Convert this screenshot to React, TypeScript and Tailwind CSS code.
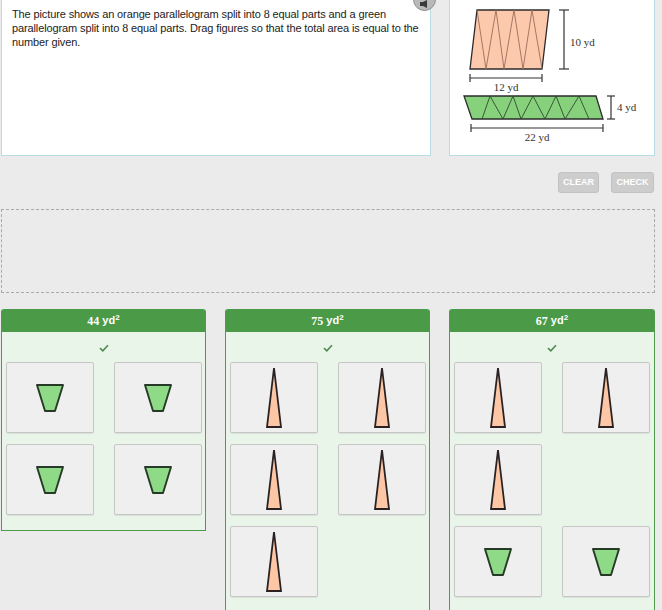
import React from "react";

type Shape = "tri" | "trap";

const COLUMNS: { area: string; tiles: (Shape | null)[] }[] = [
  { area: "44", tiles: ["trap", "trap", "trap", "trap"] },
  { area: "75", tiles: ["tri", "tri", "tri", "tri", "tri"] },
  { area: "67", tiles: ["tri", "tri", "tri", null, "trap", "trap"] },
];

function Trapezoid() {
  return (
    <svg width="30" height="30" viewBox="0 0 30 30">
      <polygon points="2,2 28,2 20,28 10,28" fill="#8fda86" stroke="#273a27" strokeWidth="1.9" strokeLinejoin="round" />
    </svg>
  );
}

function Triangle() {
  return (
    <svg width="18" height="62" viewBox="0 0 18 62">
      <polygon points="9,1 16,60 2,60" fill="#fdc7a6" stroke="#2a2222" strokeWidth="1.8" strokeLinejoin="miter" />
    </svg>
  );
}

function Tile({ shape }: { shape: Shape }) {
  return (
    <div className="w-[88px] h-[71px] bg-[#efefef] border border-[#c6c6c6] rounded-[2px] shadow-[0_1px_1px_rgba(0,0,0,0.08)] flex items-center justify-center">
      {shape === "tri" ? <Triangle /> : <Trapezoid />}
    </div>
  );
}

function Check() {
  return (
    <svg width="10" height="8" viewBox="0 0 10 8">
      <path d="M1 4.2 L3.8 6.8 L9 1.2" fill="none" stroke="#4f8a4f" strokeWidth="1.6" />
    </svg>
  );
}

function Figure() {
  const serif = { fontFamily: '"Liberation Serif", "Times New Roman", serif' };
  return (
    <svg width="206" height="156" viewBox="449 0 206 156" style={serif}>
      {/* orange parallelogram */}
      <polygon points="476,10 548,10 541,69 469,69" fill="#fcc9ad" stroke="#2b2b2b" strokeWidth="1.3" />
      <polyline
        points="476,10 485,69 495,10 503,69 513,10 522,69 531,10 541,69"
        fill="none"
        stroke="#9b6d5b"
        strokeWidth="0.9"
      />
      <line x1="563" y1="10" x2="563" y2="69" stroke="#333" strokeWidth="1.2" />
      <line x1="558" y1="10" x2="568" y2="10" stroke="#333" strokeWidth="1.2" />
      <line x1="558" y1="69" x2="568" y2="69" stroke="#333" strokeWidth="1.2" />
      <text x="569" y="46" fontSize="11" fill="#333">10 yd</text>
      <line x1="469" y1="78" x2="541" y2="78" stroke="#333" strokeWidth="1.2" />
      <line x1="469" y1="74" x2="469" y2="82" stroke="#333" strokeWidth="1.2" />
      <line x1="541" y1="74" x2="541" y2="82" stroke="#333" strokeWidth="1.2" />
      <text x="505" y="91" fontSize="11" fill="#333" textAnchor="middle">12 yd</text>

      {/* green parallelogram */}
      <polygon points="463,96 595,96 602,119 471,119" fill="#87d17c" stroke="#2b2b2b" strokeWidth="1.3" />
      <polyline
        points="481,119 489,96 502,119 512,96 520,119 532,96 544,119 555,96 564,119 578,96 588,119"
        fill="none"
        stroke="#2f4a2f"
        strokeWidth="0.9"
      />
      <line x1="610" y1="96" x2="610" y2="119" stroke="#333" strokeWidth="1.2" />
      <line x1="606" y1="96" x2="614" y2="96" stroke="#333" strokeWidth="1.2" />
      <line x1="606" y1="119" x2="614" y2="119" stroke="#333" strokeWidth="1.2" />
      <text x="616" y="111" fontSize="11" fill="#333">4 yd</text>
      <line x1="470" y1="128" x2="602" y2="128" stroke="#333" strokeWidth="1.2" />
      <line x1="470" y1="124" x2="470" y2="132" stroke="#333" strokeWidth="1.2" />
      <line x1="602" y1="124" x2="602" y2="132" stroke="#333" strokeWidth="1.2" />
      <text x="536" y="141" fontSize="11" fill="#333" textAnchor="middle">22 yd</text>
    </svg>
  );
}

export default function App() {
  const sans = { fontFamily: '"Liberation Sans", Arial, sans-serif' };
  const num = "font-['Liberation_Serif',serif]";
  return (
    <div className="w-[662px] h-[610px] overflow-hidden bg-[#ebebeb] relative" style={sans}>
      {/* top row */}
      <div className="flex gap-[18px] pl-[1px]">
        <div className="relative w-[430px] h-[156px] bg-white border border-t-0 border-[#b7dde2] pl-[10px] pr-[4px] pt-[7px] text-[11px] leading-[14px] tracking-[-0.12px] text-[#222]">
          <p>
            The picture shows an orange parallelogram split into <span className={num + " text-[12px] leading-none"}>8</span> equal parts and a green
            parallelogram split into <span className={num + " text-[12px] leading-none"}>8</span> equal parts. Drag figures so that the total area is equal to the
            number given.
          </p>
          <div className="absolute -top-[12px] right-[-6px] w-[23px] h-[23px] rounded-full bg-[#b9b9b9] border border-[#8f8f8f] flex items-end justify-center pb-[2px]">
            <svg width="10" height="8" viewBox="0 0 10 8">
              <path d="M0 2 H3 L7 0 V8 L3 6 H0 Z" fill="#3a3a3a" />
            </svg>
          </div>
        </div>
        <div className="w-[206px] h-[156px] bg-white border border-t-0 border-[#b7dde2]">
          <Figure />
        </div>
      </div>

      {/* buttons */}
      <div className="w-[655px] flex justify-end gap-[12px] mt-[16px]">
        <div className="w-[41px] h-[21px] rounded-[3px] bg-[#cdcdcd] border border-[#c2c2c2] text-white text-[9px] font-bold flex items-center justify-center">
          CLEAR
        </div>
        <div className="w-[43px] h-[21px] rounded-[3px] bg-[#cdcdcd] border border-[#c2c2c2] text-white text-[9px] font-bold flex items-center justify-center mr-[1px]">
          CHECK
        </div>
      </div>

      {/* drop area */}
      <div className="ml-[1px] mt-[16px] w-[654px] h-[84px] border border-dashed border-[#a9a9a9]" />

      {/* answer columns */}
      <div className="flex items-start gap-[19px] ml-[1px] mt-[16px]">
        {COLUMNS.map((col, ci) => (
          <div
            key={col.area}
            className={`${ci === 2 ? "w-[206px]" : "w-[205px]"} ${ci === 0 ? "pb-[15px] border-b" : "h-[320px]"} bg-[#eaf5ea] border-x border-[#4f9a4b] rounded-t-[3px]`}
          >
            <div className="h-[23px] bg-[#4b9a47] rounded-t-[2px] flex items-center justify-center text-white text-[11px] font-bold">
              <span className={num + " text-[12px]"}>{col.area}</span>
              <span className="ml-[3px]">
                yd<sup className="text-[8px] -top-[4px]">2</sup>
              </span>
            </div>
            <div className="h-[30px] flex items-center justify-center pt-[2px]">
              <Check />
            </div>
            <div className="grid grid-cols-[88px_88px] gap-x-[20px] gap-y-[11px] px-[4px]">
              {col.tiles.map((t, i) =>
                t ? <Tile key={i} shape={t} /> : <div key={i} />
              )}
            </div>
          </div>
        ))}
      </div>
    </div>
  );
}
